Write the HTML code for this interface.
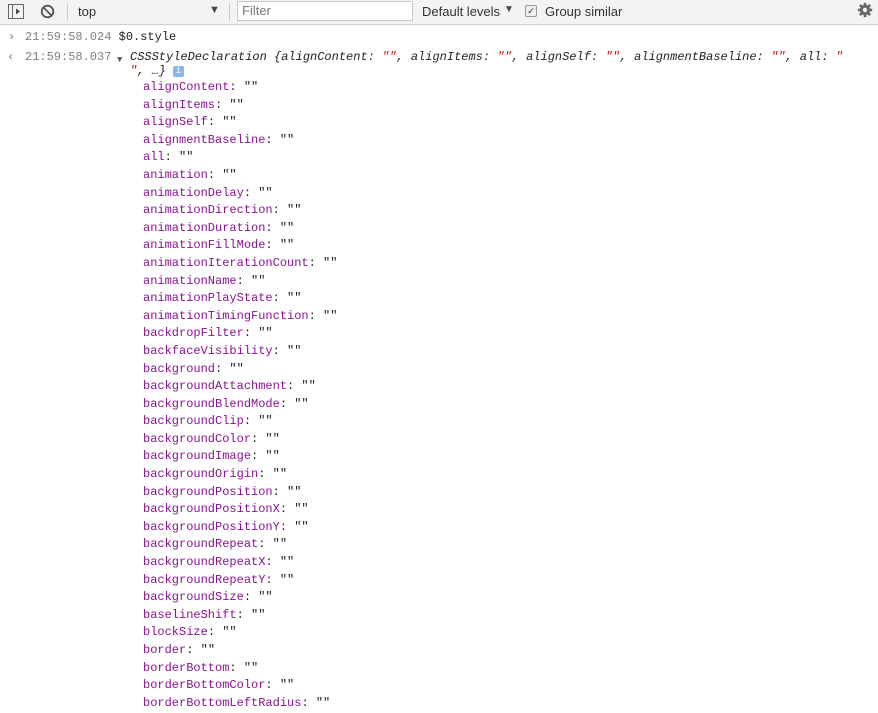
<!DOCTYPE html>
<html><head><style>
body{margin:0;width:878px;height:713px;overflow:hidden;background:#fff;font-family:"Liberation Sans",sans-serif;}
.tb{position:absolute;left:0;top:0;width:878px;height:24px;background:#f3f3f3;border-bottom:1px solid #d0d0d0;font-size:13px;color:#333;}
.tb>*{position:absolute;}
.mono{font-family:"Liberation Mono",monospace;font-size:12px;}
.ln{position:absolute;white-space:pre;}
.g{color:#808080}
.p{color:#881391}
.r{color:#c41a16}
.props{position:absolute;left:143px;top:79px;line-height:17.6px;}
.props div{white-space:pre;color:#222}
</style></head><body>
<div class="tb">
 <svg style="left:8px;top:4px" width="16" height="15" viewBox="0 0 16 15"><rect x="0.5" y="0.5" width="15" height="14" fill="none" stroke="#666"/><line x1="4.5" y1="1" x2="4.5" y2="14" stroke="#666"/><path d="M8 4.5 L12 7.5 L8 10.5Z" fill="#444"/></svg>
 <svg style="left:40px;top:4px" width="15" height="15" viewBox="0 0 15 15"><circle cx="7.5" cy="7.5" r="5.8" fill="none" stroke="#555" stroke-width="1.8"/><line x1="3.5" y1="3.5" x2="11.5" y2="11.5" stroke="#555" stroke-width="1.8"/></svg>
 <div style="left:67px;top:3px;width:1px;height:18px;background:#ccc"></div>
 <span style="left:78px;top:4px">top</span>
 <span style="left:209px;top:4px;font-size:11px;color:#444">▼</span>
 <div style="left:229px;top:3px;width:1px;height:18px;background:#ccc"></div>
 <div style="left:237px;top:1px;height:18px;border:1px solid #c8c8c8;background:#fff;color:#777;line-height:18px;padding-left:4px;width:170px">Filter</div>
 <span style="left:422px;top:4px">Default levels</span>
 <span style="left:504px;top:4px;font-size:10px;color:#444">▼</span>
 <div style="left:525px;top:5px;width:10px;height:10px;border:1px solid #999;background:#eee;font-size:9px;line-height:10px;text-align:center;border-radius:2px">✓</div>
 <span style="left:545px;top:4px">Group similar</span>
 <svg style="left:857px;top:2px" width="16" height="16" viewBox="0 0 16 16"><circle cx="8" cy="8" r="5.2" fill="#666"/><g stroke="#666" stroke-width="2.6"><line x1="8" y1="0.8" x2="8" y2="15.2"/><line x1="0.8" y1="8" x2="15.2" y2="8"/><line x1="2.9" y1="2.9" x2="13.1" y2="13.1"/><line x1="13.1" y1="2.9" x2="2.9" y2="13.1"/></g><circle cx="8" cy="8" r="2.2" fill="#f3f3f3"/></svg>
</div>
<div class="mono">
 <div class="ln g" style="left:8px;top:30px">›</div>
 <div class="ln" style="left:25px;top:30px"><span class="g">21:59:58.024</span> <span style="color:#222">$0.style</span></div>
 <div class="ln g" style="left:7px;top:50px">‹</div>
 <div class="ln" style="left:25px;top:50px"><span class="g">21:59:58.037</span></div>
 <div class="ln" style="left:117px;top:55px;font-size:9px;color:#555">▼</div>
 <div class="ln" style="left:130px;top:50px;font-style:italic;color:#222">CSSStyleDeclaration {alignContent: <span class="r">""</span>, alignItems: <span class="r">""</span>, alignSelf: <span class="r">""</span>, alignmentBaseline: <span class="r">""</span>, all: <span class="r">"</span></div>
 <div class="ln" style="left:130px;top:64px;font-style:italic;color:#222"><span class="r">"</span>, …}</div>
 <div class="ln" style="left:173px;top:66px;width:11px;height:11px;background:#8ab4ee;color:#fff;font-size:9px;line-height:11px;text-align:center;border-radius:2px">i</div>
 <div class="props">
<div><span class="p">alignContent</span>: ""</div>
<div><span class="p">alignItems</span>: ""</div>
<div><span class="p">alignSelf</span>: ""</div>
<div><span class="p">alignmentBaseline</span>: ""</div>
<div><span class="p">all</span>: ""</div>
<div><span class="p">animation</span>: ""</div>
<div><span class="p">animationDelay</span>: ""</div>
<div><span class="p">animationDirection</span>: ""</div>
<div><span class="p">animationDuration</span>: ""</div>
<div><span class="p">animationFillMode</span>: ""</div>
<div><span class="p">animationIterationCount</span>: ""</div>
<div><span class="p">animationName</span>: ""</div>
<div><span class="p">animationPlayState</span>: ""</div>
<div><span class="p">animationTimingFunction</span>: ""</div>
<div><span class="p">backdropFilter</span>: ""</div>
<div><span class="p">backfaceVisibility</span>: ""</div>
<div><span class="p">background</span>: ""</div>
<div><span class="p">backgroundAttachment</span>: ""</div>
<div><span class="p">backgroundBlendMode</span>: ""</div>
<div><span class="p">backgroundClip</span>: ""</div>
<div><span class="p">backgroundColor</span>: ""</div>
<div><span class="p">backgroundImage</span>: ""</div>
<div><span class="p">backgroundOrigin</span>: ""</div>
<div><span class="p">backgroundPosition</span>: ""</div>
<div><span class="p">backgroundPositionX</span>: ""</div>
<div><span class="p">backgroundPositionY</span>: ""</div>
<div><span class="p">backgroundRepeat</span>: ""</div>
<div><span class="p">backgroundRepeatX</span>: ""</div>
<div><span class="p">backgroundRepeatY</span>: ""</div>
<div><span class="p">backgroundSize</span>: ""</div>
<div><span class="p">baselineShift</span>: ""</div>
<div><span class="p">blockSize</span>: ""</div>
<div><span class="p">border</span>: ""</div>
<div><span class="p">borderBottom</span>: ""</div>
<div><span class="p">borderBottomColor</span>: ""</div>
<div><span class="p">borderBottomLeftRadius</span>: ""</div>
 </div>
</div>
</body></html>
